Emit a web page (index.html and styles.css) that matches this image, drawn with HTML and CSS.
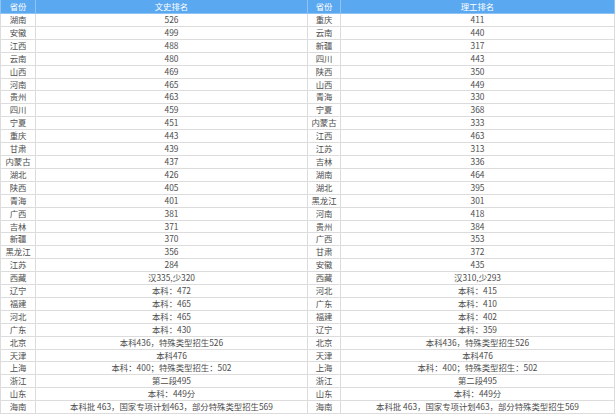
FILE: index.html
```html
<!DOCTYPE html>
<html lang="zh">
<head>
<meta charset="utf-8">
<link rel="stylesheet" href="styles.css">
</head>
<body>
<table class="rank">
<colgroup><col class="c-prov"><col class="c-val"><col class="c-prov2"><col class="c-val2"></colgroup>
<thead>
<tr><th>省份</th><th>文史排名</th><th>省份</th><th>理工排名</th></tr>
</thead>
<tbody>
<tr><td>湖南</td><td>526</td><td>重庆</td><td>411</td></tr>
<tr><td>安徽</td><td>499</td><td>云南</td><td>440</td></tr>
<tr><td>江西</td><td>488</td><td>新疆</td><td>317</td></tr>
<tr><td>云南</td><td>480</td><td>四川</td><td>443</td></tr>
<tr><td>山西</td><td>469</td><td>陕西</td><td>350</td></tr>
<tr><td>河南</td><td>465</td><td>山西</td><td>449</td></tr>
<tr><td>贵州</td><td>463</td><td>青海</td><td>330</td></tr>
<tr><td>四川</td><td>459</td><td>宁夏</td><td>368</td></tr>
<tr><td>宁夏</td><td>451</td><td>内蒙古</td><td>333</td></tr>
<tr><td>重庆</td><td>443</td><td>江西</td><td>463</td></tr>
<tr><td>甘肃</td><td>439</td><td>江苏</td><td>313</td></tr>
<tr><td>内蒙古</td><td>437</td><td>吉林</td><td>336</td></tr>
<tr><td>湖北</td><td>426</td><td>湖南</td><td>464</td></tr>
<tr><td>陕西</td><td>405</td><td>湖北</td><td>395</td></tr>
<tr><td>青海</td><td>401</td><td>黑龙江</td><td>301</td></tr>
<tr><td>广西</td><td>381</td><td>河南</td><td>418</td></tr>
<tr><td>吉林</td><td>371</td><td>贵州</td><td>384</td></tr>
<tr><td>新疆</td><td>370</td><td>广西</td><td>353</td></tr>
<tr><td>黑龙江</td><td>356</td><td>甘肃</td><td>372</td></tr>
<tr><td>江苏</td><td>284</td><td>安徽</td><td>435</td></tr>
<tr><td>西藏</td><td>汉335,少320</td><td>西藏</td><td>汉310,少293</td></tr>
<tr><td>辽宁</td><td>本科：472</td><td>河北</td><td>本科：415</td></tr>
<tr><td>福建</td><td>本科：465</td><td>广东</td><td>本科：410</td></tr>
<tr><td>河北</td><td>本科：465</td><td>福建</td><td>本科：402</td></tr>
<tr><td>广东</td><td>本科：430</td><td>辽宁</td><td>本科：359</td></tr>
<tr><td>北京</td><td>本科436，特殊类型招生526</td><td>北京</td><td>本科436，特殊类型招生526</td></tr>
<tr><td>天津</td><td>本科476</td><td>天津</td><td>本科476</td></tr>
<tr><td>上海</td><td>本科：400；特殊类型招生：502</td><td>上海</td><td>本科：400；特殊类型招生：502</td></tr>
<tr><td>浙江</td><td>第二段495</td><td>浙江</td><td>第二段495</td></tr>
<tr><td>山东</td><td>本科：449分</td><td>山东</td><td>本科：449分</td></tr>
<tr><td>海南</td><td>本科批 463，国家专项计划463，部分特殊类型招生569</td><td>海南</td><td>本科批 463，国家专项计划463，部分特殊类型招生569</td></tr>
</tbody>
</table>
</body>
</html>
```
FILE: styles.css
```css
html, body {
  margin: 0;
  padding: 0;
  background: #ffffff;
}
.rank {
  border-collapse: collapse;
  table-layout: fixed;
  width: 614px;
  font-family: "Noto Sans CJK SC", "Noto Sans", sans-serif;
  font-size: 8.4px;
  color: #4d4d4d;
}
.c-prov { width: 35px; }
.c-val { width: 272px; }
.c-prov2 { width: 33px; }
.c-val2 { width: 274px; }
.rank th {
  background: #5aa8f0;
  color: #ffffff;
  font-weight: normal;
  height: 13px;
  padding: 0;
  line-height: 13px;
  border: 1px solid #8fc3f3;
  border-top: none;
}
.rank td {
  height: 11.9px;
  padding: 0;
  line-height: 11.9px;
  text-align: center;
  border: 1px solid #dcdcdc;
  white-space: nowrap;
  overflow: hidden;
}
```
